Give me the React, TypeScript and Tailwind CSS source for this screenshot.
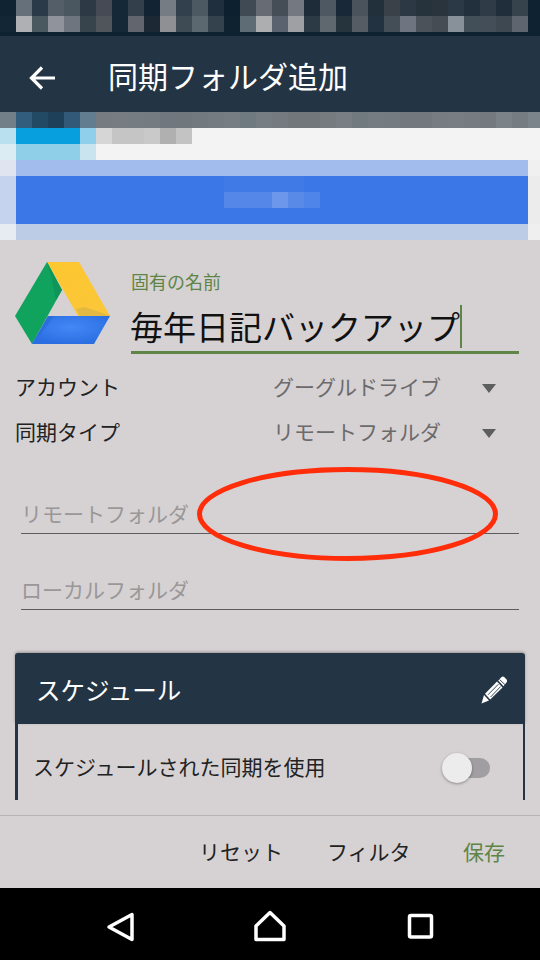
const cells = (colors: string[], last = "#0e2232"): [number, string][] => [
  ...colors.map((c): [number, string] => [16, c]),
  [12, last],
];

const statusRows: [number, string][][] = [
  cells(["#0f2333", "#66707a", "#2a3a48", "#535e68", "#4a5660", "#2d3944", "#454a54", "#152838", "#343f4c", "#122434", "#767c84", "#323f4c", "#4c5862", "#1f2f3d", "#0c2030", "#3f4a54", "#666b74", "#454d57", "#747880", "#1e2c3a", "#4d5862", "#182838", "#4a525b", "#22303c", "#3a4148", "#2c3944", "#26323c", "#2a343c", "#2b3947", "#22303e", "#2f3c48", "#202e3c", "#36424c"]),
  cells(["#122635", "#aeb0b3", "#4a5860", "#90939c", "#6e757e", "#38444c", "#50555c", "#142838", "#62656e", "#1c2834", "#8e9094", "#3e4a54", "#5c6870", "#34424e", "#0e2230", "#5e6c76", "#acaeb0", "#5a6270", "#9ea0a4", "#2c3a46", "#60686f", "#26343e", "#565c64", "#223240", "#444e56", "#6e7480", "#4c525a", "#464c54", "#88909a", "#424e58", "#444e58", "#3e4850", "#5e656e"]),
];

const blue = "#3b77e6";
const webRows: [number, string][][] = [
  cells(["#737f88", "#325d7c", "#234a65", "#1f4059", "#325a78", "#627c90", "#757b81", "#767c82", "#757c82", "#747b81", "#70777e", "#70787e", "#72797f", "#747b81", "#767d83", "#6f7a80", "#767d83", "#757a80", "#72777c", "#72777c", "#767b80", "#787e83", "#707a7f", "#757d83", "#747c82", "#72787e", "#72787d", "#767c82", "#777d83", "#757b81", "#73797f", "#7b8389", "#757d83"], "#7b848a"),
  [[16, "#b8e0ee"], [64, "#079fde"], [16, "#90cfec"], [16, "#d6d6d6"], [32, "#c5c5c5"], [16, "#c9c9c9"], [16, "#b0b0b0"], [16, "#c3c3c3"], [348, "#f3f3f3"]],
  [[16, "#dcecf3"], [64, "#90cfe8"], [16, "#c9e4ef"], [444, "#f3f3f3"]],
  [[16, "#e0e4f1"], [512, "#a2bced"], [12, "#f0f0f0"]],
  [[16, "#c5d3ef"], [208, blue], [80, "#3f7ae6"], [224, blue], [12, "#ececec"]],
  [[16, "#c5d3ef"], [208, blue], [48, "#5587e8"], [16, "#6d97ea"], [16, "#5a8ae8"], [16, "#4f84e8"], [208, blue], [12, "#ececec"]],
  [[16, "#c5d3ef"], [512, blue], [12, "#ececec"]],
  [[16, "#e7ebf2"], [512, "#bdcce6"], [12, "#efefef"]],
];

function Mosaic({ rows }: { rows: [number, string][][] }) {
  return (
    <div>
      {rows.map((row, i) => (
        <div key={i} className="flex h-4">
          {row.map(([w, c], j) => (
            <div key={j} style={{ width: w, backgroundColor: c }} />
          ))}
        </div>
      ))}
    </div>
  );
}

function DriveLogo() {
  return (
    <svg width="96" height="84" viewBox="15 261 96 84" className="shrink-0">
      <defs>
        <linearGradient id="yel" x1="0" y1="0" x2="1" y2="1">
          <stop offset="0" stopColor="#fdc72f" />
          <stop offset="1" stopColor="#fbc63a" />
        </linearGradient>
        <radialGradient id="blu" cx="0.5" cy="0.4" r="0.6">
          <stop offset="0" stopColor="#4488f6" />
          <stop offset="1" stopColor="#2a6ee2" />
        </radialGradient>
      </defs>
      <polygon points="47,262 79,262 110,316 78,316" fill="url(#yel)" />
      <polygon points="80,316 110,316 100,312 84,307 76,309" fill="#e4b942" />
      <polygon points="15,316 47,262 62,290 32,344" fill="#10a35e" />
      <polygon points="47,262 62,290 56,300 51,276" fill="#0f9459" />
      <polygon points="48,316 110,316 94,344 32,344" fill="url(#blu)" />
      <polygon points="48,316 54,316 38,338 32,344" fill="#2c6fdc" />
    </svg>
  );
}

function Pencil() {
  return (
    <svg width="26" height="28" viewBox="0 0 26 28" fill="#fff">
      <path d="M0.5 27.5 L3 19 L8 24.5 Z" />
      <path d="M4 17.8 L16 5.6 L21.5 11.4 L9.2 23.6 Z" />
      <path d="M17.2 4.4 L20.6 1 C21.4 0.3 22.4 0.3 23.2 1 L25.6 3.6 C26.2 4.4 26.2 5.4 25.6 6.2 L22.6 10.2 Z" />
      <path d="M7 18.8 L17.4 8.2 M9.6 21 L19.6 10.6 M18.5 3.5 L24.4 9" stroke="#233544" strokeWidth="0.9" fill="none" />
    </svg>
  );
}

function Picker({ label, value }: { label: string; value: string }) {
  return (
    <div className="flex h-[45px] items-center text-[21px] leading-none">
      <span className="w-[258px] text-[#222]">{label}</span>
      <span className="w-[209px] text-[#6c6a6b]">{value}</span>
      <span className="h-0 w-0 border-x-[7px] border-t-[9px] border-x-transparent border-t-[#5f5e5f]" />
    </div>
  );
}

function FolderField({ label, className }: { label: string; className: string }) {
  return (
    <div className={`mx-[6px] flex h-[40px] items-center border-b border-[#5c5c5c] pt-[4px] text-[21px] leading-none text-[#999798] ${className}`}>
      {label}
    </div>
  );
}

export default function App() {
  return (
    <div className="relative flex h-[960px] w-[540px] flex-col overflow-hidden bg-[#d6d2d4] font-['Roboto','Noto_Sans_CJK_JP',sans-serif]">
      <Mosaic rows={statusRows} />
      <div className="h-1 bg-[#0e2130]" />

      <header className="flex h-[76px] items-center bg-[#233544] pt-2 text-white">
        <svg width="26" height="24" viewBox="0 0 26 24" fill="none" stroke="#fff" strokeWidth="3.2" className="ml-[29px]">
          <path d="M26 12 H3 M13 1.5 L2.5 12 L13 22.5" />
        </svg>
        <h1 className="ml-[53px] text-[30px] font-normal leading-none">同期フォルダ追加</h1>
      </header>

      <Mosaic rows={webRows} />

      <main className="h-[560px] overflow-hidden px-[15px]">
        <div className="flex pt-[21px]">
          <DriveLogo />
          <div className="ml-5 mr-[6px] flex-1 pt-[11px]">
            <div className="text-[18px] leading-[22px] text-[#5e8545]">固有の名前</div>
            <div className="mt-[11px] flex h-[49px] items-center border-b-[3px] border-[#5e8545]">
              <span className="-ml-px text-[33px] leading-none text-[#111]">毎年日記バックアップ</span>
              <span className="h-[43px] w-[2px] self-start bg-[#5e8545]" />
            </div>
          </div>
        </div>

        <div className="mt-[12px]">
          <Picker label="アカウント" value="グーグルドライブ" />
          <Picker label="同期タイプ" value="リモートフォルダ" />
        </div>

        <FolderField label="リモートフォルダ" className="mt-[38px]" />
        <FolderField label="ローカルフォルダ" className="mt-[36px]" />

        <section className="mt-[43px]">
          <div className="flex h-[71px] items-center justify-between rounded-t-[3px] bg-[#233544] pl-[21px] pr-[18px] pt-[2px] text-white shadow-[0_-1px_3px_rgba(0,0,0,0.3)]">
            <h2 className="mt-[5px] text-[24.5px] font-normal leading-none">スケジュール</h2>
            <Pencil />
          </div>
          <div className="flex h-[87px] items-start justify-between border-l-[3px] border-r-2 border-[#233544] pl-[15px] pr-[33px] pt-[29px]">
            <span className="text-[21px] leading-[30px] text-[#222]">スケジュールされた同期を使用</span>
            <span className="relative mt-[5px] h-5 w-[44px] rounded-full bg-[#a09ea0]">
              <span className="absolute -left-[4px] -top-[5px] h-[30px] w-[30px] rounded-full bg-[#ececec] shadow-[0_1px_3px_rgba(0,0,0,0.35)]" />
            </span>
          </div>
        </section>
      </main>

      <footer className="mt-[15px] flex h-[73px] items-center border-t border-[#b5b3b4] pr-[35px] pt-[2px] text-[21px] leading-none">
        <span className="ml-[199px] text-[#222]">リセット</span>
        <span className="ml-[44px] text-[#222]">フィルタ</span>
        <span className="ml-auto text-[#5e8545]">保存</span>
      </footer>

      <nav className="flex h-[72px] items-center bg-black">
        <svg width="540" height="72" viewBox="0 888 540 72" fill="none" stroke="#fff" strokeWidth="3.5" strokeLinejoin="round">
          <path d="M132 914.5 V939.5 L109 927 Z" />
          <path d="M270 912.5 L284 926 V939.5 H256 V926 Z" />
          <rect x="409.5" y="915.5" width="22" height="21.5" rx="1.5" />
        </svg>
      </nav>

      <svg className="pointer-events-none absolute left-0 top-0" width="540" height="960" fill="none">
        <ellipse cx="347.5" cy="514" rx="148" ry="44.5" stroke="#ff2d0a" strokeWidth="5" />
      </svg>
    </div>
  );
}
